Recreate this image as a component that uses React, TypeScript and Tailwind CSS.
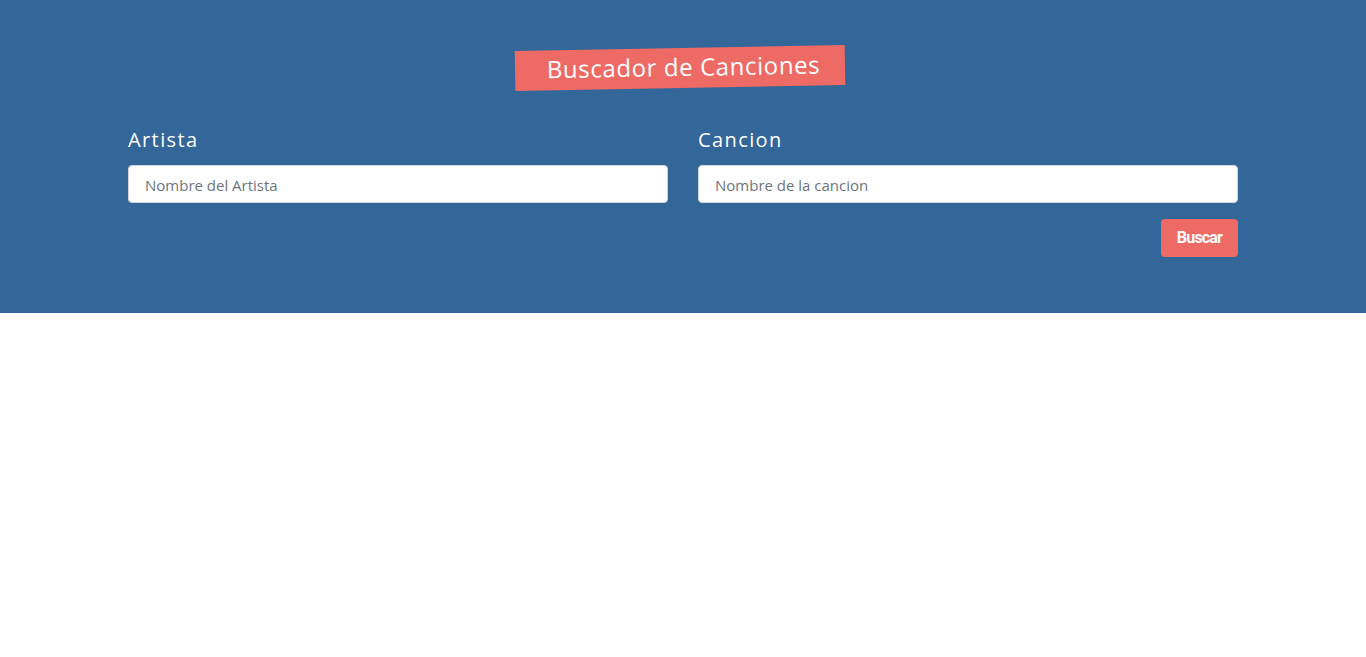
export default function App() {
  return (
    <div className="min-h-screen bg-white">
      <header className="bg-[#336699] pt-[48px] pb-[56px]">
        <div className="mx-auto w-[1110px]">
          <div className="flex justify-center">
            <h1 className="-rotate-1 w-[330px] h-[40px] bg-[#ee6a65] flex items-center justify-center pl-[7px] pb-[3px] text-white text-[24px] tracking-[0.6px] font-['Open_Sans',sans-serif] translate-x-[-3px]">
              Buscador de Canciones
            </h1>
          </div>
          <form className="mt-[38px]" onSubmit={(e) => e.preventDefault()}>
            <div className="grid grid-cols-2 gap-[30px]">
              <div>
                <label className="block text-white text-[20px] leading-[28px] tracking-[1.4px] font-['Open_Sans',sans-serif] mb-[11px]">
                  Artista
                </label>
                <input
                  type="text"
                  placeholder="Nombre del Artista"
                  className="w-full h-[38px] bg-white rounded-[4px] border border-[#ced4da] px-[16px] pt-[1px] text-[15px] text-[#495057] placeholder:text-[#6c757d] font-['Open_Sans',sans-serif] outline-none"
                />
              </div>
              <div>
                <label className="block text-white text-[20px] leading-[28px] tracking-[1.4px] font-['Open_Sans',sans-serif] mb-[11px]">
                  Cancion
                </label>
                <input
                  type="text"
                  placeholder="Nombre de la cancion"
                  className="w-full h-[38px] bg-white rounded-[4px] border border-[#ced4da] px-[16px] pt-[1px] text-[15px] text-[#495057] placeholder:text-[#6c757d] font-['Open_Sans',sans-serif] outline-none"
                />
              </div>
            </div>
            <div className="flex justify-end mt-[16px]">
              <button
                type="submit"
                className="w-[77px] h-[38px] rounded-[4px] bg-[#ee6a65] text-white text-[16px] font-bold font-['Roboto',sans-serif] tracking-[-0.8px]"
              >
                Buscar
              </button>
            </div>
          </form>
        </div>
      </header>
    </div>
  )
}
